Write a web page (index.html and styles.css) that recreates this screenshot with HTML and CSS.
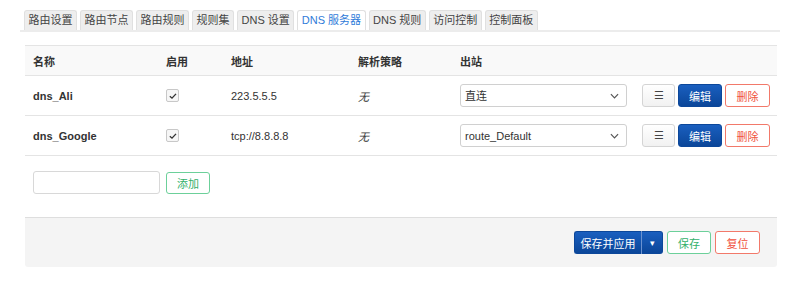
FILE: index.html
```html
<!DOCTYPE html>
<html lang="zh-CN">
<head>
  <meta charset="UTF-8">
  <title>DNS 服务器</title>
  <link rel="stylesheet" href="styles.css">
</head>
<body>

  <div class="page">
    <!-- 标签栏 -->
    <ul class="tabs">
      <li>路由设置</li>
      <li>路由节点</li>
      <li>路由规则</li>
      <li>规则集</li>
      <li>DNS 设置</li>
      <li class="active">DNS 服务器</li>
      <li>DNS 规则</li>
      <li>访问控制</li>
      <li>控制面板</li>
    </ul>

    <div class="panel">
      <div class="row head">
        <div class="cell">名称</div>
        <div class="cell">启用</div>
        <div class="cell">地址</div>
        <div class="cell">解析策略</div>
        <div class="cell">出站</div>
        <div class="cell"></div>
      </div>

      <div class="row">
        <div class="cell name">dns_Ali</div>
        <div class="cell"><span class="check"><svg viewBox="0 0 12 12" width="10" height="10"><path d="M2.2 6.2 L4.8 8.6 L9.6 3.4" fill="none" stroke="#333" stroke-width="1.6"/></svg></span></div>
        <div class="cell">223.5.5.5</div>
        <div class="cell none">无</div>
        <div class="cell">
          <div class="select-wrap">
            <select><option>直连</option></select>
            <svg class="chev" viewBox="0 0 10 6" width="9" height="6"><path d="M1 1 L5 5 L9 1" fill="none" stroke="#555" stroke-width="1.3"/></svg>
          </div>
        </div>
        <div class="cell actions">
          <button class="btn plain">☰</button>
          <button class="btn blue">编辑</button>
          <button class="btn red">删除</button>
        </div>
      </div>

      <div class="row">
        <div class="cell name">dns_Google</div>
        <div class="cell"><span class="check"><svg viewBox="0 0 12 12" width="10" height="10"><path d="M2.2 6.2 L4.8 8.6 L9.6 3.4" fill="none" stroke="#333" stroke-width="1.6"/></svg></span></div>
        <div class="cell">tcp://8.8.8.8</div>
        <div class="cell none">无</div>
        <div class="cell">
          <div class="select-wrap">
            <select><option>route_Default</option></select>
            <svg class="chev" viewBox="0 0 10 6" width="9" height="6"><path d="M1 1 L5 5 L9 1" fill="none" stroke="#555" stroke-width="1.3"/></svg>
          </div>
        </div>
        <div class="cell actions">
          <button class="btn plain">☰</button>
          <button class="btn blue">编辑</button>
          <button class="btn red">删除</button>
        </div>
      </div>

      <div class="add">
        <input type="text">
        <button class="btn green">添加</button>
      </div>

      <div class="footer">
        <div class="split">
          <button class="btn blue main">保存并应用</button>
          <button class="btn blue caret">▾</button>
        </div>
        <button class="btn green">保存</button>
        <button class="btn red">复位</button>
      </div>
    </div>
  </div>

</body>
</html>
```

FILE: styles.css
```css
body {
  margin: 0;
  padding: 0;
  background: #fff;
  font-family: "Liberation Sans", "Noto Sans CJK SC", sans-serif;
  font-size: 11px;
  color: #333;
}

.page {
  padding: 10px 20px 0 20px;
}

/* 标签栏 */
.tabs {
  list-style: none;
  margin: 0;
  padding: 0 0 0 4px;
  display: flex;
  gap: 3px;
  border-bottom: 2px solid #ececec;
}

.tabs li {
  height: 19px;
  line-height: 19px;
  padding: 0 3.5px;
  background: #eee;
  border: 1px solid #e0e0e0;
  border-bottom: none;
  border-radius: 3px 3px 0 0;
  color: #444;
  font-size: 11px;
}

.tabs li.active {
  background: #fff;
  color: #2f7bd9;
}

.panel {
  margin: 13px 3px 0 5px;
}

/* 表格 */
.row {
  display: grid;
  grid-template-columns: 133px 65px 127px 102px 182px 1fr;
  height: 40px;
  box-sizing: border-box;
  align-items: center;
  border-bottom: 1px solid #e4e4e4;
}

.row.head {
  height: 31px;
  background: #f9f9f9;
  border-top: 1px solid #e4e4e4;
  font-weight: bold;
  color: #333;
}

.cell {
  padding: 0 8px;
}

.cell.name {
  font-weight: bold;
}

.cell.none {
  font-style: italic;
}

.check {
  display: inline-flex;
  align-items: center;
  justify-content: center;
  width: 11px;
  height: 11px;
  border: 1px solid #c8c8c8;
  border-radius: 2px;
  background: #f6f6f6;
  vertical-align: middle;
}

.select-wrap {
  position: relative;
  width: 167px;
}

.select-wrap select {
  appearance: none;
  -webkit-appearance: none;
  width: 100%;
  height: 23px;
  border: 1px solid #d0d0d0;
  border-radius: 3px;
  background: #fff;
  padding: 0 4px;
  font-family: inherit;
  font-size: 11px;
  color: #333;
}

.chev {
  position: absolute;
  right: 8px;
  top: 9px;
  pointer-events: none;
}

.actions {
  display: flex;
  gap: 3px;
  padding-left: 8px;
}

/* 按钮 */
.btn {
  height: 23px;
  padding: 0 10px;
  border-radius: 3px;
  font-family: inherit;
  font-size: 11px;
  background: #fff;
  border: 1px solid #ccc;
  cursor: pointer;
}

.btn.plain {
  width: 33px;
  padding: 0;
  background: linear-gradient(#fff, #f1f1f1);
  border-color: #d4d4d4;
  color: #444;
}

.btn.blue {
  width: 44px;
  padding: 0;
  color: #fff;
  background: linear-gradient(#1a5fbf, #0b4699);
  border: 1px solid #0c479a;
}

.btn.red {
  width: 45px;
  padding: 0;
  color: #f0503c;
  border: 1px solid #f2796a;
  background: #fff;
}

.btn.green {
  width: 44px;
  padding: 0;
  color: #33b06a;
  border: 1px solid #6cd09a;
  background: #fff;
}

.add {
  display: flex;
  gap: 6px;
  padding: 15px 8px 0 8px;
  height: 61px;
  box-sizing: border-box;
  align-items: flex-start;
}

.add input {
  width: 121px;
  height: 19px;
  border: 1px solid #d8d8d8;
  border-radius: 3px;
  padding: 1px 2px;
}

.add .btn.green {
  height: 22px;
  margin-top: 1px;
}

.footer {
  background: #f4f4f4;
  border-top: 1px solid #dedede;
  border-radius: 0 0 3px 3px;
  height: 50px;
  display: flex;
  justify-content: flex-end;
  align-items: flex-start;
  gap: 4px;
  padding: 13px 17px 0 0;
  box-sizing: border-box;
}

.split {
  display: flex;
}

.split .btn.main {
  width: 68px;
  border-radius: 3px 0 0 3px;
  border-right: 1px solid #6a92d0;
}

.split .btn.caret {
  width: 21px;
  border-radius: 0 3px 3px 0;
  border-left: none;
  font-size: 9px;
}

.footer .btn {
  height: 23px;
}
```
